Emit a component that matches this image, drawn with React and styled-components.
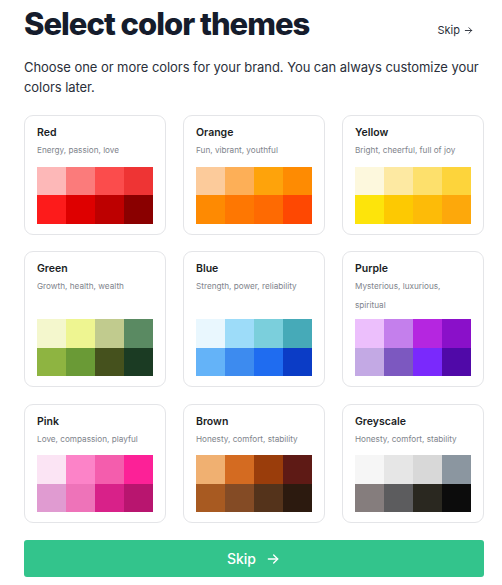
import React from "react";
import styled, { createGlobalStyle } from "styled-components";

const Global = createGlobalStyle`
  * { box-sizing: border-box; }
  html, body { margin: 0; padding: 0; background: #ffffff; }
  body { font-family: Inter, "Noto Sans", "Liberation Sans", sans-serif; color: #1f2430; }
`;

const Page = styled.div`
  width: 502px;
  padding: 5px 18px 8px 24px;
  display: flex;
  flex-direction: column;
`;

const Header = styled.div`
  display: flex;
  justify-content: space-between;
  align-items: flex-start;
`;

const Title = styled.h1`
  margin: 0;
  font-size: 31px;
  line-height: 38px;
  font-weight: 800;
  letter-spacing: -1px;
  color: #151c2c;
`;

const TopSkip = styled.button`
  margin-top: 18px;
  margin-right: 10px;
  padding: 0;
  border: none;
  background: none;
  display: flex;
  align-items: center;
  gap: 3px;
  font-family: inherit;
  font-size: 11px;
  color: #2a2f3a;
  cursor: pointer;
`;

const Lead = styled.p`
  margin: 15px 0 0;
  font-size: 13px;
  letter-spacing: -0.06px;
  line-height: 19.5px;
  color: #2a2f3a;
  max-width: 470px;
`;

const Grid = styled.div`
  margin-top: 18px;
  width: 460px;
  display: grid;
  grid-template-columns: repeat(3, 142px);
  grid-auto-rows: minmax(119.5px, auto);
  column-gap: 17px;
  row-gap: 16.5px;
`;

const Card = styled.div`
  border: 1px solid #e4e5e8;
  border-radius: 9px;
  padding: 10px 12px 10px 12px;
  display: flex;
  flex-direction: column;
  background: #fff;
`;

const CardTitle = styled.div`
  font-size: 10.5px;
  line-height: 14px;
  font-weight: 600;
  color: #1a1d24;
`;

const CardDesc = styled.div`
  margin-top: 1px;
  font-size: 8.2px;
  line-height: 19px;
  color: #80848c;
`;

const Swatches = styled.div`
  margin-top: auto;
  padding-top: 4px;
  display: grid;
  grid-template-columns: repeat(4, 29px);
  grid-auto-rows: 28.5px;
`;

const Swatch = styled.div`
  background: ${(p) => p.$c};
`;

const MainButton = styled.button`
  margin-top: 17px;
  width: 460px;
  height: 37px;
  border: none;
  border-radius: 3px;
  background: #33c48c;
  color: #ffffff;
  font-family: inherit;
  font-size: 14px;
  font-weight: 500;
  display: flex;
  align-items: center;
  justify-content: center;
  gap: 9px;
  cursor: pointer;
`;

const Arrow = ({ size = 12, w = 2 }) => (
  <svg width={size} height={size} viewBox="0 0 24 24" fill="none" stroke="currentColor" strokeWidth={w} strokeLinecap="round" strokeLinejoin="round">
    <path d="M5 12h14" />
    <path d="M13 6l6 6-6 6" />
  </svg>
);

const themes = [
  { name: "Red", desc: "Energy, passion, love", colors: ["#fdb8b8", "#fb7b7b", "#fb4c4c", "#ee3434", "#fd1b1b", "#de0000", "#bd0000", "#8a0000"] },
  { name: "Orange", desc: "Fun, vibrant, youthful", colors: ["#fccb9b", "#fdaf57", "#fea30b", "#fe8b02", "#fe8a02", "#fe7702", "#fe6a02", "#fe4802"] },
  { name: "Yellow", desc: "Bright, cheerful, full of joy", colors: ["#fdf8dd", "#fde9a2", "#fde06c", "#fdd43b", "#fde40b", "#fdc902", "#fdbb08", "#fda80b"] },
  { name: "Green", desc: "Growth, health, wealth", colors: ["#f4f7cd", "#eef591", "#c1cb8e", "#5a8a62", "#8eb441", "#6a9a36", "#45511d", "#1b3b23"] },
  { name: "Blue", desc: "Strength, power, reliability", colors: ["#e9f7fe", "#9ddcf9", "#7bcfdc", "#46aab8", "#64b3f8", "#3d8bef", "#1f6cf0", "#0b3cc6"] },
  { name: "Purple", desc: "Mysterious, luxurious, spiritual", colors: ["#ecbffc", "#c47fec", "#b526e0", "#8a10c9", "#c3a9e4", "#7c58c0", "#7a29fc", "#5009a8"] },
  { name: "Pink", desc: "Love, compassion, playful", colors: ["#fbe4f4", "#fc83c8", "#f45dad", "#fc2197", "#e09bd1", "#ee73b9", "#d82189", "#b8156f"] },
  { name: "Brown", desc: "Honesty, comfort, stability", colors: ["#f0b071", "#d46b21", "#9a3d0b", "#5e1a15", "#a85a21", "#844b25", "#54331b", "#2c1a0f"] },
  { name: "Greyscale", desc: "Honesty, comfort, stability", colors: ["#f6f6f6", "#e6e6e6", "#d8d8d8", "#8b96a0", "#857d7d", "#5c5c5e", "#2a2820", "#0c0c0c"] },
];

export default function App() {
  return (
    <>
      <Global />
      <Page>
        <Header>
          <Title>Select color themes</Title>
          <TopSkip>
            Skip <Arrow size={11} w={2} />
          </TopSkip>
        </Header>
        <Lead>Choose one or more colors for your brand. You can always customize your colors later.</Lead>
        <Grid>
          {themes.map((t) => (
            <Card key={t.name}>
              <CardTitle>{t.name}</CardTitle>
              <CardDesc>{t.desc}</CardDesc>
              <Swatches>
                {t.colors.map((c, i) => (
                  <Swatch key={i} $c={c} />
                ))}
              </Swatches>
            </Card>
          ))}
        </Grid>
        <MainButton>
          Skip <Arrow size={16} w={2} />
        </MainButton>
      </Page>
    </>
  );
}
